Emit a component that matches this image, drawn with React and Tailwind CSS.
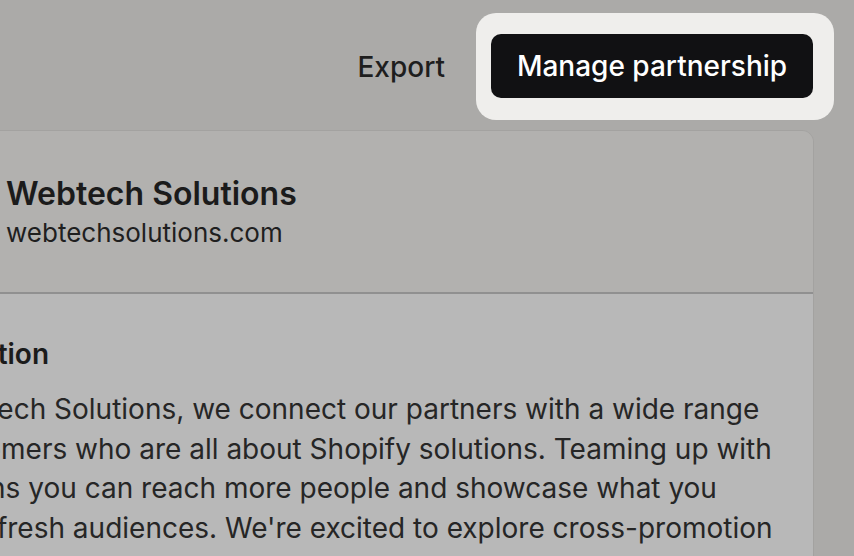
import React from "react";

const bodyLines = [
  "At Webtech Solutions, we connect our partners with a wide range",
  "of customers who are all about Shopify solutions. Teaming up with",
  "us means you can reach more people and showcase what you",
  "offer to fresh audiences. We're excited to explore cross-promotion",
];

export default function App() {
  return (
    <div
      className="w-[854px] h-[556px] overflow-hidden bg-[#abaaa8] text-[#1b1b1b]"
      style={{ fontFamily: "Inter, 'Noto Sans', sans-serif" }}
    >
      {/* Top actions */}
      <div className="flex items-center justify-end pt-[13px] pr-[20px]">
        <button className="mr-[31px] text-[28px] font-medium text-[#1e1e1e]">Export</button>
        <div className="rounded-[20px] bg-[#efeeec] pl-[15px] pr-[21px] pt-[21px] pb-[22px]">
          <button className="flex h-[64px] w-[322px] items-center justify-center rounded-[10px] bg-[#111113] text-[28px] font-medium text-white">
            Manage partnership
          </button>
        </div>
      </div>

      {/* Partner card */}
      <div className="mt-[10px] ml-[-140px] mr-[40px] overflow-hidden rounded-[12px] border border-[#a3a2a0]">
        <div className="flex h-[161px] items-center gap-[33px] bg-[#b2b1af] pl-[32px]">
          <div className="h-[80px] w-[80px] shrink-0 rounded-[12px] bg-[#9f9e9c]" />
          <div className="flex flex-col">
            <span className="text-[32px] font-semibold leading-[42px]">Webtech Solutions</span>
            <span className="text-[26px] leading-[36px] text-[#1f1f1f]">webtechsolutions.com</span>
          </div>
        </div>
        <div className="h-[2px] bg-[#909090]" />
        <div className="bg-[#b8b8b8] pl-[32px] pt-[40px] pb-[40px]">
          <h3 className="text-[28px] font-semibold leading-[40px]">Description</h3>
          <p className="mt-[16px] whitespace-nowrap text-[28px] leading-[39.5px] text-[#262626]">
            {bodyLines.map((line) => (
              <span key={line} className="block">
                {line}
              </span>
            ))}
          </p>
        </div>
      </div>
    </div>
  );
}
